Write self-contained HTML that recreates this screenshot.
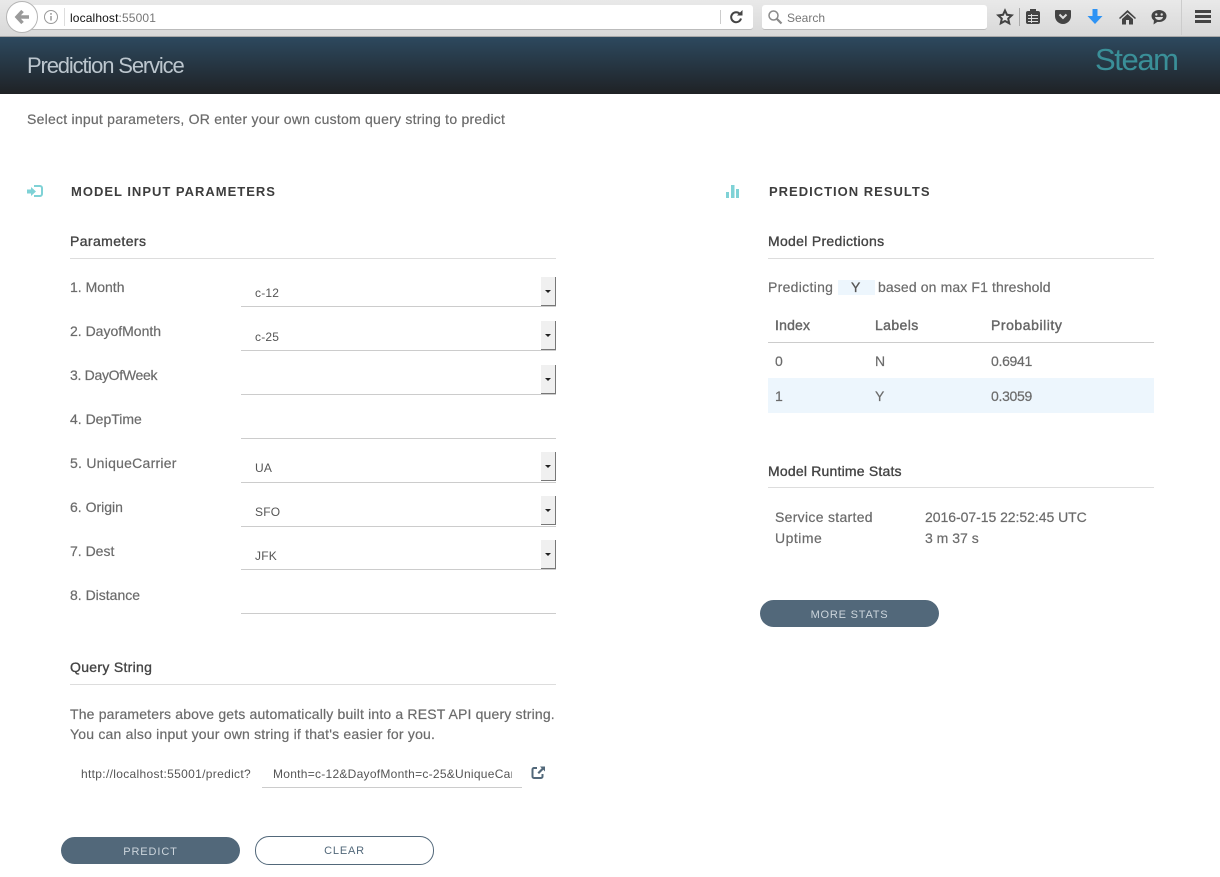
<!DOCTYPE html>
<html><head><meta charset="utf-8"><style>
html,body{margin:0;padding:0;background:#fff;width:1220px;height:877px;overflow:hidden}
body{position:relative;font-family:"Liberation Sans",sans-serif;color:#6b6b6b;font-size:14px}
.t{position:absolute;white-space:nowrap;line-height:18px;-webkit-text-stroke:.2px #6b6b6b}
.l{position:absolute;background:#ccc;height:1px}
.h{font-weight:bold;color:#3d3d3d;letter-spacing:1px;font-size:13px;-webkit-text-stroke:0}
.s{color:#444;font-size:14px;letter-spacing:.3px;-webkit-text-stroke:.35px #444}
.th{color:#666;letter-spacing:.4px;-webkit-text-stroke:.4px #666}
.sel{position:absolute;left:541px;width:14px;height:28px;background:#f0f0f0;border-right:1px solid #777;border-bottom:1px solid #777}
.sel:after{content:"";position:absolute;left:4px;top:13px;border:3px solid transparent;border-top:3px solid #222;border-bottom:0}
.v{font-size:12px;color:#555;letter-spacing:.2px;-webkit-text-stroke:0}
.btn{position:absolute;box-sizing:border-box;height:27px;width:179px;border-radius:14px;text-align:center;font-size:11px;letter-spacing:.9px;line-height:30px}
</style></head><body>

<div style="position:absolute;left:0;top:0;width:1220px;height:36px;background:linear-gradient(#e9e9e9,#d8d8d8);border-bottom:1px solid #a8a8a8"></div>
<div style="position:absolute;left:20px;top:5px;width:733px;height:24px;background:#fff;border-bottom:1px solid #bbb;border-radius:0 3px 3px 0"></div>
<div style="position:absolute;left:6px;top:1px;width:30px;height:30px;border-radius:50%;background:#fff;border:1px solid #b5b5b5"></div>
<svg style="position:absolute;left:13px;top:8px" width="18" height="18" viewBox="0 0 18 18"><path d="M9.500 3L4 9l5.500 6M4.500 9H16" fill="none" stroke="#9a9a9a" stroke-width="3.500"/></svg>
<svg style="position:absolute;left:43px;top:9px" width="16" height="16" viewBox="0 0 16 16"><circle cx="8" cy="8" r="6.500" fill="none" stroke="#999"/><path d="M8 7v4.500M8 4v1.700" stroke="#888" stroke-width="1.300"/></svg>
<div class="l" style="left:64px;top:8px;width:1px;height:18px;background:#ddd"></div>
<div class="t" style="left:70px;top:9px;font-size:12px;color:#111;letter-spacing:.13px;-webkit-text-stroke:0">localhost<span style="color:#777">:55001</span></div>
<div class="l" style="left:720px;top:10px;width:1px;height:14px;background:#ccc"></div>
<svg style="position:absolute;left:729px;top:9px" width="15" height="15" viewBox="0 0 15 15"><path d="M11 5A5 5 0 1 0 12 9.500" fill="none" stroke="#444" stroke-width="2"/><path d="M8 6.500h5.500V1z" fill="#444"/></svg>
<div style="position:absolute;left:762px;top:5px;width:225px;height:24px;background:#fff;border-bottom:1px solid #bbb;border-radius:3px"></div>
<svg style="position:absolute;left:767px;top:9px" width="16" height="16" viewBox="0 0 16 16"><circle cx="6.500" cy="6.500" r="4.500" fill="none" stroke="#8a8a8a" stroke-width="1.500"/><path d="M9.800 9.800L14.500 14.500" stroke="#8a8a8a" stroke-width="2.200"/></svg>
<div class="t" style="left:787px;top:9px;font-size:12px;color:#777;-webkit-text-stroke:0">Search</div>
<svg style="position:absolute;left:995px;top:7px" width="20" height="20" viewBox="0 0 20 20"><path d="M10 3.500l2 4.300 4.700.6-3.500 3.200 1 4.700L10 14l-4.200 2.300 1-4.700-3.500-3.200 4.700-.6z" fill="#e6e6e6" stroke="#444" stroke-width="2"/></svg>
<div class="l" style="left:1019px;top:8px;width:1px;height:18px;background:#aaa"></div>
<svg style="position:absolute;left:1024px;top:8px" width="18" height="17" viewBox="0 0 18 17"><rect x="2" y="3" width="14" height="13" rx="2" fill="#444"/><rect x="6" y="1" width="6" height="4" fill="#444"/><path d="M4 7.500h10M4 10.500h10M4 13.500h10M7.500 6v9" stroke="#ddd"/></svg>
<svg style="position:absolute;left:1054px;top:9px" width="18" height="16" viewBox="0 0 18 16"><path d="M2 1h14a1 1 0 0 1 1 1v5a8 8 0 0 1-16 0V2a1 1 0 0 1 1-1z" fill="#444"/><path d="M5.500 5.500L9 9l3.500-3.500" fill="none" stroke="#ddd" stroke-width="2"/></svg>
<svg style="position:absolute;left:1086px;top:8px" width="18" height="17" viewBox="0 0 18 17"><path d="M6.500 1h5v7H16.500L9 16 1.500 8h5z" fill="#2e93f4"/></svg>
<svg style="position:absolute;left:1119px;top:9px" width="18" height="16" viewBox="0 0 18 16"><path d="M8.500 1L0 9l1 1 7.500-6.500L16 10l1-1z" fill="#444"/><path d="M3 10l5.500-5L14 10v5.500h-4V11H7v4.500H3z" fill="#444"/></svg>
<svg style="position:absolute;left:1150px;top:9px" width="18" height="17" viewBox="0 0 18 17"><ellipse cx="9" cy="7" rx="7.500" ry="6" fill="#444"/><path d="M4 11l-.5 4.500L8 12.500z" fill="#444"/><circle cx="6.300" cy="5.500" r="1.200" fill="#ddd"/><circle cx="11.700" cy="5.500" r="1.200" fill="#ddd"/><path d="M5 8h8a4 3 0 0 1-8 0z" fill="#ddd"/></svg>
<div class="l" style="left:1181px;top:0;width:1px;height:35px;background:#ccc"></div>
<div style="position:absolute;left:1195px;top:10px;width:16px;height:3px;background:#444;box-shadow:0 5px 0 #444,0 10px 0 #444"></div>

<div style="position:absolute;left:0;top:37px;width:1220px;height:57px;background:linear-gradient(#2d495f,#1f2225)"></div>
<div class="t" style="left:27px;top:52px;line-height:28px;font-size:22px;color:#bcc6ce;letter-spacing:-1.15px;-webkit-text-stroke:0">Prediction Service</div>
<div class="t" style="left:1095px;top:42px;line-height:36px;font-size:31px;color:#3a8f98;letter-spacing:-1.4px;-webkit-text-stroke:0">Steam</div>

<div class="t" style="left:27px;top:110px;letter-spacing:.24px">Select input parameters, OR enter your own custom query string to predict</div>

<svg style="position:absolute;left:26px;top:184px" width="18" height="15" viewBox="0 0 18 15"><path d="M8 2h6a2 2 0 0 1 2 2v6a2 2 0 0 1-2 2H8" fill="none" stroke="#7fd2d6" stroke-width="2"/><path d="M1 5.500h4V3l5 4.500L5 12V9.500H1z" fill="#7fd2d6"/></svg>
<div class="t h" style="left:71px;top:183px">MODEL INPUT PARAMETERS</div>
<svg style="position:absolute;left:725px;top:184px" width="16" height="15" viewBox="0 0 16 15"><path d="M1 8h3v6H1zM6 1h3.500v13H6zM11 5h3v9h-3z" fill="#7fd2d6"/></svg>
<div class="t h" style="left:769px;top:183px">PREDICTION RESULTS</div>

<div class="t s" style="left:70px;top:232px;letter-spacing:.4px">Parameters</div>
<div class="l" style="left:70px;top:258px;width:486px;background:#ddd"></div>

<div class="t" style="left:70px;top:278px">1. Month</div>
<div class="t" style="left:70px;top:322px">2. DayofMonth</div>
<div class="t" style="left:70px;top:366px;letter-spacing:-.3px">3. DayOfWeek</div>
<div class="t" style="left:70px;top:410px">4. DepTime</div>
<div class="t" style="left:70px;top:454px;letter-spacing:.25px">5. UniqueCarrier</div>
<div class="t" style="left:70px;top:498px">6. Origin</div>
<div class="t" style="left:70px;top:542px">7. Dest</div>
<div class="t" style="left:70px;top:586px">8. Distance</div>

<div class="l" style="left:241px;top:306px;width:315px"></div>
<div class="l" style="left:241px;top:350px;width:315px"></div>
<div class="l" style="left:241px;top:394px;width:315px"></div>
<div class="l" style="left:241px;top:438px;width:315px"></div>
<div class="l" style="left:241px;top:482px;width:315px"></div>
<div class="l" style="left:241px;top:526px;width:315px"></div>
<div class="l" style="left:241px;top:569px;width:315px"></div>
<div class="l" style="left:241px;top:613px;width:315px"></div>

<div class="sel" style="top:277px"></div>
<div class="sel" style="top:321px"></div>
<div class="sel" style="top:365px"></div>
<div class="sel" style="top:452px"></div>
<div class="sel" style="top:496px"></div>
<div class="sel" style="top:540px"></div>

<div class="t v" style="left:255px;top:284px">c-12</div>
<div class="t v" style="left:255px;top:328px">c-25</div>
<div class="t v" style="left:255px;top:459px">UA</div>
<div class="t v" style="left:255px;top:503px">SFO</div>
<div class="t v" style="left:255px;top:547px">JFK</div>

<div class="t s" style="left:70px;top:658px">Query String</div>
<div class="l" style="left:70px;top:684px;width:486px;background:#ddd"></div>
<div class="t" style="left:70px;top:705px;letter-spacing:.17px">The parameters above gets automatically built into a REST API query string.</div>
<div class="t" style="left:70px;top:725px;letter-spacing:.2px">You can also input your own string if that's easier for you.</div>
<div class="t" style="left:81px;top:765px;font-size:12px;color:#555;letter-spacing:.32px;-webkit-text-stroke:0">http://localhost:55001/predict?</div>
<div class="t" style="left:273px;top:765px;width:239px;overflow:hidden;font-size:12px;color:#555;letter-spacing:.27px;-webkit-text-stroke:0">Month=c-12&amp;DayofMonth=c-25&amp;UniqueCarrier=UA</div>
<div class="l" style="left:262px;top:787px;width:260px"></div>
<svg style="position:absolute;left:531px;top:765px" width="15" height="15" viewBox="0 0 15 15"><path d="M6 3H3a1.500 1.500 0 0 0-1.500 1.500v7A1.500 1.500 0 0 0 3 13h7a1.500 1.500 0 0 0 1.500-1.500V9" fill="none" stroke="#52687a" stroke-width="2"/><path d="M9 1.500h5v5l-1.700-1.700L8 9 6.500 7.500l4.200-4.300z" fill="#52687a"/></svg>

<div class="btn" style="left:61px;top:837px;background:#52687a;color:#ccd5dc">PREDICT</div>
<div class="btn" style="left:255px;top:836px;height:29px;border:1px solid #52687a;color:#52687a;background:#fff;line-height:29px;letter-spacing:.8px">CLEAR</div>

<div class="t s" style="left:768px;top:232px">Model Predictions</div>
<div class="l" style="left:768px;top:258px;width:386px;background:#ddd"></div>
<div class="t" style="left:768px;top:278px;letter-spacing:.3px">Predicting</div>
<div style="position:absolute;left:838px;top:280px;width:37px;height:15px;background:#edf6fd"></div>
<div class="t" style="left:851px;top:278px;color:#555;-webkit-text-stroke:.3px #555">Y</div>
<div class="t" style="left:878px;top:278px;letter-spacing:.12px">based on max F1 threshold</div>

<div class="t th" style="left:775px;top:316px;letter-spacing:.2px">Index</div>
<div class="t th" style="left:875px;top:316px">Labels</div>
<div class="t th" style="left:991px;top:316px;letter-spacing:.55px">Probability</div>
<div class="l" style="left:768px;top:342px;width:386px"></div>
<div class="t" style="left:775px;top:352px">0</div>
<div class="t" style="left:875px;top:352px">N</div>
<div class="t" style="left:991px;top:352px;letter-spacing:-.3px">0.6941</div>
<div style="position:absolute;left:768px;top:378px;width:386px;height:35px;background:#edf6fd"></div>
<div class="t" style="left:775px;top:387px">1</div>
<div class="t" style="left:875px;top:387px">Y</div>
<div class="t" style="left:991px;top:387px;letter-spacing:-.3px">0.3059</div>

<div class="t s" style="left:768px;top:462px;letter-spacing:.2px">Model Runtime Stats</div>
<div class="l" style="left:768px;top:487px;width:386px;background:#ddd"></div>
<div class="t" style="left:775px;top:508px;letter-spacing:.3px">Service started</div>
<div class="t" style="left:925px;top:508px;letter-spacing:-.04px">2016-07-15 22:52:45 UTC</div>
<div class="t" style="left:775px;top:529px;letter-spacing:.5px">Uptime</div>
<div class="t" style="left:925px;top:529px">3 m 37 s</div>

<div class="btn" style="left:760px;top:600px;background:#52687a;color:#ccd5dc;letter-spacing:.8px">MORE STATS</div>
</body></html>
